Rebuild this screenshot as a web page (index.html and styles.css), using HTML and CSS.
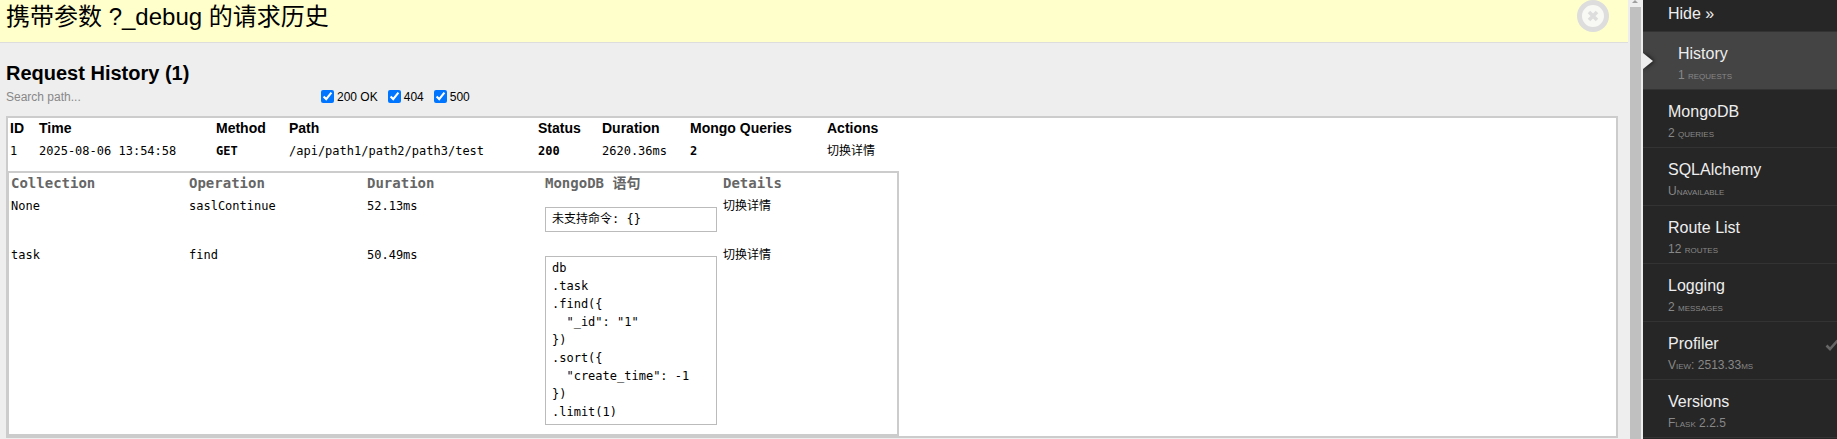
FILE: index.html
```html
<!DOCTYPE html>
<html lang="zh">
<head>
<meta charset="utf-8">
<title>Request History</title>
<link rel="stylesheet" href="styles.css">
</head>
<body>
<div class="page">
  <main class="main">
    <header class="banner">
      <h1 class="banner-title">携带参数 ?_debug 的请求历史</h1>
      <svg class="close" width="34" height="34" viewBox="0 0 34 34"><circle cx="17" cy="16" r="13.5" fill="#f8f8f4" stroke="#ddd" stroke-width="5"/><path d="M13 12l8 8M21 12l-8 8" stroke="#ddd" stroke-width="3.6"/></svg>
    </header>
    <section class="content">
      <h2 class="heading">Request History (1)</h2>
      <div class="filters">
        <span class="search">Search path...</span>
        <label class="check"><input type="checkbox" checked>200 OK</label>
        <label class="check"><input type="checkbox" checked>404</label>
        <label class="check"><input type="checkbox" checked>500</label>
      </div>
      <div class="panel">
        <div class="req-row req-head">
          <span>ID</span><span>Time</span><span>Method</span><span>Path</span><span>Status</span><span>Duration</span><span>Mongo Queries</span><span>Actions</span>
        </div>
        <div class="req-row req-data">
          <span>1</span><span>2025-08-06 13:54:58</span><b>GET</b><span>/api/path1/path2/path3/test</span><b>200</b><span>2620.36ms</span><b>2</b><span class="cjk">切换详情</span>
        </div>
        <div class="queries">
          <div class="q-row q-head">
            <span>Collection</span><span>Operation</span><span>Duration</span><span>MongoDB 语句</span><span>Details</span>
          </div>
          <div class="q-row q-data">
            <span>None</span><span>saslContinue</span><span>52.13ms</span><pre class="stmt">未支持命令: {}</pre><span class="cjk">切换详情</span>
          </div>
          <div class="q-row q-data">
            <span>task</span><span>find</span><span>50.49ms</span><pre class="stmt">db
.task
.find({
  "_id": "1"
})
.sort({
  "create_time": -1
})
.limit(1)</pre><span class="cjk">切换详情</span>
          </div>
        </div>
      </div>
    </section>
  </main>
  <div class="scrollbar"><div class="thumb"></div></div>
  <nav class="sidebar">
    <div class="nav-item nav-hide"><span class="nav-title">Hide »</span></div>
    <div class="nav-item active"><span class="nav-title">History</span><small>1 requests</small></div>
    <div class="nav-item"><span class="nav-title">MongoDB</span><small>2 queries</small></div>
    <div class="nav-item"><span class="nav-title">SQLAlchemy</span><small>Unavailable</small></div>
    <div class="nav-item"><span class="nav-title">Route List</span><small>12 routes</small></div>
    <div class="nav-item"><span class="nav-title">Logging</span><small>2 messages</small></div>
    <div class="nav-item"><span class="nav-title">Profiler</span><small>View: 2513.33ms</small>
      <svg class="tick" width="14" height="12" viewBox="0 0 14 12"><path d="M1.5 6.5l3.5 3.5 7.5-8.5" fill="none" stroke="#666" stroke-width="2.6"/></svg>
    </div>
    <div class="nav-item"><span class="nav-title">Versions</span><small>Flask 2.2.5</small></div>
  </nav>
</div>
</body>
</html>
```
FILE: styles.css
```css
* { box-sizing: border-box; }
html, body { margin: 0; height: 100%; overflow: hidden; }
body { font-family: "Liberation Sans", "Noto Sans CJK SC", sans-serif; font-size: 12px; color: #000; background: #eee; }
.page { display: flex; height: 439px; overflow: hidden; }
.main { width: 1628px; flex: none; background: #eee; }
.banner { height: 43px; background: #ffc; border-bottom: 1px solid #ddd; display: flex; justify-content: space-between; padding: 0 18px 0 6px; }
.banner-title { margin: 0; font-size: 24px; font-weight: normal; line-height: 34px; }
.content { padding: 18px 10px 0 6px; }
.heading { margin: 0; font-size: 20px; line-height: 24px; font-weight: bold; }
.filters { display: flex; align-items: center; height: 19px; margin-top: 2px; margin-bottom: 10px; font-size: 12px; }
.search { width: 315px; color: #888; }
.check { display: flex; align-items: center; margin-right: 10px; }
.check input { margin: 0 3px 0 0; width: 13px; height: 13px; }
.panel { background: #fff; border: 2px solid #ccc; height: 322px; width: 1612px; }
.req-row { display: grid; grid-template-columns: 29px 177px 73px 249px 64px 88px 137px 60px; padding-left: 2px; }
.req-head { font-weight: bold; font-size: 14px; line-height: 17px; padding-top: 2px; }
.req-data { font-family: "DejaVu Sans Mono", "Noto Sans CJK SC", monospace; font-size: 12px; line-height: 16px; margin-top: 6px; height: 28px; }
.cjk { font-family: "Liberation Sans", "Noto Sans CJK SC", sans-serif; font-size: 12px; }
.queries { border: 2px solid #ccc; border-left-width: 1px; width: 891px; height: 265px; padding: 0 2px; }
.q-row { display: grid; grid-template-columns: 178px 178px 178px 178px 100px; }
.q-head { font-family: "DejaVu Sans Mono", "Noto Sans CJK SC", monospace; font-weight: bold; font-size: 14px; color: #666; line-height: 20px; height: 22px; }
.q-data { font-family: "DejaVu Sans Mono", "Noto Sans CJK SC", monospace; font-size: 12px; line-height: 16px; padding-top: 3px; }
.stmt { margin: 9px 0 12px; width: 172px; padding: 2px 6px 3px; border: 1px solid #bbb; font-family: "DejaVu Sans Mono", "Noto Sans CJK SC", monospace; font-size: 12px; line-height: 18px; }
.scrollbar { position: relative; width: 15px; flex: none; background: #eee; padding: 7px 2px 0; }
.scrollbar::before { content: ""; position: absolute; left: 4px; top: 0; border-left: 3.5px solid transparent; border-right: 3.5px solid transparent; border-bottom: 3px solid #a0a0a0; }
.thumb { background: #c0c0c0; height: 100%; }
.sidebar { flex: 1; background: #262626; color: #fff; font-size: 16px; overflow: hidden; }
.nav-item { position: relative; height: 58px; padding: 12px 25px 0; border-bottom: 1px solid #333; }
.nav-hide { height: 32px; padding-top: 4px; }
.nav-title { display: block; line-height: 20px; color: #eee; }
.nav-item small { display: block; font-size: 12px; font-variant: small-caps; color: #888; line-height: 16px; margin-top: 3px; }
.active { background: #444; padding-left: 35px; }
.active::before { content: ""; position: absolute; left: 0; top: 21px; border-left: 10px solid #eee; border-top: 8px solid transparent; border-bottom: 8px solid transparent; filter: drop-shadow(1px 0 2px #111); }
.tick { position: absolute; right: -2px; top: 17px; }
```
